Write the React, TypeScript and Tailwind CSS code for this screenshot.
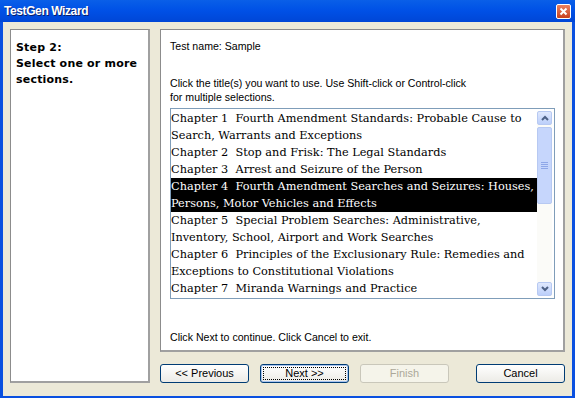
import React from "react";

const chapters: { text: string[]; selected?: boolean }[] = [
  { text: ["Chapter 1  Fourth Amendment Standards: Probable Cause to", "Search, Warrants and Exceptions"] },
  { text: ["Chapter 2  Stop and Frisk: The Legal Standards"] },
  { text: ["Chapter 3  Arrest and Seizure of the Person"] },
  { text: ["Chapter 4  Fourth Amendment Searches and Seizures: Houses,", "Persons, Motor Vehicles and Effects"], selected: true },
  { text: ["Chapter 5  Special Problem Searches: Administrative,", "Inventory, School, Airport and Work Searches"] },
  { text: ["Chapter 6  Principles of the Exclusionary Rule: Remedies and", "Exceptions to Constitutional Violations"] },
  { text: ["Chapter 7  Miranda Warnings and Practice"] },
];

function XpButton({ label, disabled, focused }: { label: string; disabled?: boolean; focused?: boolean }) {
  return (
    <button
      type="button"
      className={
        "w-[89px] h-[19px] rounded-[3px] border text-[11px] leading-none flex items-center justify-center " +
        (disabled
          ? "border-[#c9c7ba] bg-[#f5f4ea] text-[#aca899]"
          : "border-[#003c74] bg-gradient-to-b from-white to-[#ecebe6] text-black") +
        (focused ? " shadow-[inset_0_0_0_1px_#a8c4f0]" : "")
      }
    >
      {focused ? (
        <span className="flex items-center justify-center w-[83px] h-[13px] border border-dotted border-black">{label}</span>
      ) : (
        label
      )}
    </button>
  );
}

function Arrow({ up }: { up?: boolean }) {
  return (
    <div className="h-[14px] rounded-[2px] border border-[#b7c9f2] bg-gradient-to-b from-[#dfe8fd] to-[#bccffa] flex items-center justify-center">
      <svg width="8" height="6" viewBox="0 0 8 6">
        <path d={up ? "M1 5 L4 2 L7 5" : "M1 1 L4 4 L7 1"} stroke="#4d6185" strokeWidth="2" fill="none" />
      </svg>
    </div>
  );
}

export default function App() {
  return (
    <div className="w-[575px] h-[398px] flex flex-col bg-[#0a50e0] font-['Liberation_Sans',sans-serif]">
      <div className="h-[22px] shrink-0 flex items-center justify-between pl-[4px] pr-[4px] bg-gradient-to-b from-[#0a5fe8] via-[#0050e6] to-[#0046d6]">
        <span className="text-white font-bold text-[12px] tracking-[-0.4px] [text-shadow:1px_1px_0_#0a1e6a]">
          TestGen Wizard
        </span>
        <div className="w-[15px] h-[15px] rounded-[2px] border border-white bg-gradient-to-b from-[#e8805f] to-[#c8401c] flex items-center justify-center">
          <svg width="9" height="9" viewBox="0 0 9 9">
            <path d="M1.5 1.5 L7.5 7.5 M7.5 1.5 L1.5 7.5" stroke="white" strokeWidth="2" />
          </svg>
        </div>
      </div>
      <div className="flex-1 mx-[3px] mb-[3px] bg-[#ece9d8] flex gap-[10px] pl-[7px] pr-[7px] pt-[7px] pb-[13px]">
        <div className="w-[140px] shrink-0 bg-white border border-[#8c8c8c] border-r-2 border-b-2 border-r-[#a0a0a0] border-b-[#a0a0a0] pl-[5px] pt-[10px] font-['DejaVu_Sans',sans-serif] font-bold text-[11px] leading-[16px] tracking-[0.2px] text-black">
          <div className="whitespace-pre">Step 2:</div>
          <div className="whitespace-pre">Select one or more</div>
          <div className="whitespace-pre">sections.</div>
        </div>
        <div className="flex-1 min-w-0 flex flex-col">
          <div className="h-[323px] bg-white border border-[#8c8c8c] border-r-2 border-b-2 border-r-[#a0a0a0] border-b-[#a0a0a0] flex flex-col pl-[9px] pr-[8px] text-[10.6px] text-black">
            <div className="mt-[10px] leading-[13px]">Test name: Sample</div>
            <div className="mt-[23px] leading-[14px]">
              <div>Click the title(s) you want to use. Use Shift-click or Control-click</div>
              <div>for multiple selections.</div>
            </div>
            <div className="mt-[4px] h-[191px] border border-[#7f9db9] flex">
              <div className="flex-1 min-w-0 pt-[1px] font-['DejaVu_Serif',serif] text-[11.3px] leading-[17px] overflow-hidden">
                {chapters.map((c, i) => (
                  <div key={i} className={c.selected ? "bg-black text-white" : ""}>
                    {c.text.map((t, j) => (
                      <div key={j} className="whitespace-pre">{t}</div>
                    ))}
                  </div>
                ))}
              </div>
              <div className="w-[15px] shrink-0 mr-[2px] my-[2px] flex flex-col gap-[2px] bg-[#fbfbf8]">
                <Arrow up />
                <div className="h-[77px] rounded-[2px] border border-[#b7c9f2] bg-[#c6d6fc] flex items-center justify-center">
                  <div className="flex flex-col gap-[1px]">
                    <div className="w-[7px] h-px bg-[#8ea7e8]" />
                    <div className="w-[7px] h-px bg-[#8ea7e8]" />
                    <div className="w-[7px] h-px bg-[#8ea7e8]" />
                    <div className="w-[7px] h-px bg-[#8ea7e8]" />
                  </div>
                </div>
                <div className="flex-1" />
                <Arrow />
              </div>
            </div>
            <div className="mt-auto mb-[6px] leading-[13px]">Click Next to continue. Click Cancel to exit.</div>
          </div>
          <div className="mt-[12px] flex">
            <XpButton label="<< Previous" />
            <div className="ml-[11px]">
              <XpButton label="Next >>" focused />
            </div>
            <div className="ml-[11px]">
              <XpButton label="Finish" disabled />
            </div>
            <div className="ml-auto">
              <XpButton label="Cancel" />
            </div>
          </div>
        </div>
      </div>
    </div>
  );
}
